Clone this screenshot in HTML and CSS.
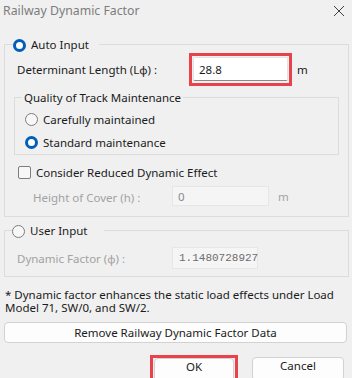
FILE: index.html
```html
<!DOCTYPE html>
<html>
<head>
<meta charset="utf-8">
<link rel="stylesheet" href="styles.css">
</head>
<body>
<div class="dialog">
  <div class="titlebar">
    <span class="title">Railway Dynamic Factor</span>
    <svg class="close" width="12" height="12" viewBox="0 0 12 12"><path d="M1 1 L11 11 M11 1 L1 11" stroke="#404040" stroke-width="1" fill="none"/></svg>
  </div>

  <div class="group auto">
    <div class="legend glegend"><span class="radio on"></span><span>Auto Input</span></div>
    <div class="row len-row">
      <span class="len-lbl">Determinant Length (Lφ) :</span>
      <div class="hl"><div class="input edit">28.8</div></div>
      <span class="unit">m</span>
    </div>
    <div class="group quality">
      <div class="legend qlegend">Quality of Track Maintenance</div>
      <div class="opts">
        <div class="opt"><span class="radio"></span><span>Carefully maintained</span></div>
        <div class="opt"><span class="radio on"></span><span>Standard maintenance</span></div>
      </div>
    </div>
    <div class="opt check-row"><span class="checkbox"></span><span>Consider Reduced Dynamic Effect</span></div>
    <div class="row cover-row disabled">
      <span class="cover-lbl">Height of Cover (h) :</span>
      <div class="input dis cover-input">0</div>
      <span class="unit cover-unit">m</span>
    </div>
  </div>

  <div class="group user">
    <div class="legend glegend user-legend"><span class="radio"></span><span>User Input</span></div>
    <div class="row df-row disabled">
      <span class="df-lbl">Dynamic Factor (φ) :</span>
      <div class="input dis df-input">1.1480728927</div>
    </div>
  </div>

  <p class="note">* Dynamic factor enhances the static load effects under Load Model 71, SW/0, and SW/2.</p>

  <div class="btn wide">Remove Railway Dynamic Factor Data</div>

  <div class="actions">
    <div class="hl-btn"><div class="btn low ok">OK</div></div>
    <div class="btn low cancel">Cancel</div>
  </div>
</div>
</body>
</html>
```

FILE: styles.css
```css
html, body {
  margin: 0;
  padding: 0;
  background: #f0f0f0;
  overflow: hidden;
}
body {
  width: 352px;
  height: 378px;
  font-family: "Noto Sans", "Open Sans", sans-serif;
  font-size: 11.5px;
  color: #1b1b1b;
}
.dialog {
  display: flex;
  flex-direction: column;
}
.titlebar {
  height: 44px;
  display: flex;
  justify-content: space-between;
  align-items: flex-start;
  padding: 0 7px 0 3px;
  box-sizing: border-box;
}
.title {
  font-size: 12.3px;
  color: #7c7c7c;
  line-height: 22px;
}
.close {
  margin-top: 5px;
}
.group {
  border: 1px solid #dcdcdc;
  display: flex;
  flex-direction: column;
}
.legend {
  display: flex;
  align-items: center;
  align-self: flex-start;
  height: 16px;
  line-height: 16px;
  margin-top: -8px;
  background: #f0f0f0;
}
.auto {
  margin: 0 3px 0 4px;
  padding: 0 9px 10px 9px;
}
.glegend {
  margin-left: -1px;
  padding: 0 10px 0 0;
  gap: 5px;
}
.user-legend {
  margin-left: -2px;
  padding-right: 17px;
}
.radio {
  width: 13px;
  height: 13px;
  box-sizing: border-box;
  border-radius: 50%;
  border: 1px solid #7d7d7d;
  background: #f7f7f7;
  flex: none;
}
.radio.on {
  border: 3.5px solid #005fb8;
  background: #ffffff;
}
.row {
  display: flex;
  align-items: center;
}
.len-row {
  height: 33px;
  padding-left: 3px;
}
.len-lbl {
  width: 172px;
  flex: none;
}
.hl {
  width: 103px;
  height: 33px;
  box-sizing: border-box;
  border: 3px solid #e8434a;
  padding: 1px 1px 2px 1px;
  flex: none;
}
.input {
  box-sizing: border-box;
  display: flex;
  align-items: center;
  padding-left: 5px;
}
.edit {
  height: 100%;
  background: #ffffff;
  border: 1px solid #e3e3e3;
  border-bottom: 1px solid #8a8a8a;
  border-radius: 2px;
  color: #1b1b1b;
}
.unit {
  margin-left: 5px;
}
.quality {
  margin-top: 11px;
  padding: 0 6px;
}
.qlegend {
  padding: 0 2px;
  margin-left: 1px;
}
.opts {
  padding-top: 2px;
}
.opt {
  display: flex;
  align-items: center;
  gap: 5px;
  height: 23px;
  padding-left: 4px;
}
.check-row {
  height: 22px;
  margin-top: 6px;
  padding-left: 4px;
}
.checkbox {
  width: 13px;
  height: 13px;
  box-sizing: border-box;
  border: 1px solid #7d7d7d;
  border-radius: 2px;
  background: #f7f7f7;
  flex: none;
}
.disabled {
  color: #a2a2a2;
}
.cover-row {
  margin-top: 3px;
  height: 20px;
  padding-left: 19px;
}
.cover-lbl {
  width: 139px;
  flex: none;
  padding-top: 3px;
}
.dis {
  height: 20px;
  background: #f5f5f5;
  border: 1px solid #e6e6e6;
  color: #8a8a8a;
}
.cover-input {
  width: 97px;
}
.cover-unit {
  margin-left: 9px;
}
.user {
  margin: 13px 3px 0 4px;
  padding: 0 9px 7px 9px;
}
.df-row {
  margin-top: 8px;
  height: 22px;
  padding-left: 3px;
}
.df-lbl {
  width: 155px;
  flex: none;
}
.df-input {
  width: 86px;
  height: 22px;
  font-family: "Liberation Mono", "DejaVu Sans Mono", monospace;
  font-size: 11px;
  color: #6d6d6d;
  padding-left: 6px;
}
.note {
  margin: 11px 4px 0 5px;
  line-height: 13px;
}
.btn {
  box-sizing: border-box;
  background: #fdfdfd;
  border: 1px solid #d2d2d2;
  border-radius: 4px;
  display: flex;
  align-items: center;
  justify-content: center;
}
.wide {
  margin: 8px 5px 0 4px;
  height: 21px;
}
.actions {
  display: flex;
  justify-content: flex-end;
  align-items: flex-start;
  margin-top: 12px;
  padding-right: 8px;
  gap: 14px;
}
.hl-btn {
  border: 3px solid #e8434a;
  padding: 0 1px;
  width: 88px;
  height: 30px;
  box-sizing: border-box;
}
.btn.low {
  align-items: flex-start;
  line-height: 16px;
}
.ok {
  height: 100%;
  padding-top: 0;
}
.cancel {
  width: 92px;
  height: 24px;
  margin-top: 2px;
}
```
